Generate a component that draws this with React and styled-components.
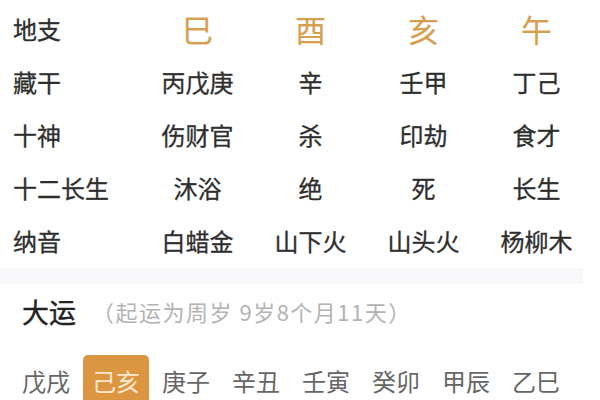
import React from "react";
import styled, { createGlobalStyle } from "styled-components";

const Global = createGlobalStyle`
  html, body { margin: 0; padding: 0; background: #ffffff; }
  body { font-family: "Noto Sans CJK SC", "Noto Sans", sans-serif; width: 600px; height: 400px; overflow: hidden; }
`;

const Page = styled.div`
  width: 600px;
  height: 400px;
  overflow: hidden;
  display: flex;
  flex-direction: column;
  & > * { flex-shrink: 0; }
`;

const Table = styled.div`
  display: grid;
  grid-template-columns: 141px repeat(4, 113px);
  grid-auto-rows: 53px;
  padding-top: 2px;
`;

const Label = styled.div`
  display: flex;
  align-items: center;
  padding-left: 13px;
  font-size: 24px;
  color: #2e2e2e;
  -webkit-text-stroke: 0.3px #2e2e2e;
`;

const Cell = styled.div`
  display: flex;
  align-items: center;
  justify-content: center;
  font-size: ${(p) => (p.$branch ? "31px" : "24px")};
  color: ${(p) => (p.$branch ? "#d69f50" : "#2e2e2e")};
  -webkit-text-stroke: ${(p) => (p.$branch ? "0.2px #d69f50" : "0.3px #2e2e2e")};
`;

const Band = styled.div`
  margin-top: 1px;
  width: 583px;
  height: 16px;
  background: #f8f7fa;
`;

const Header = styled.div`
  box-sizing: border-box;
  display: flex;
  align-items: center;
  height: 60px;
  padding: 0 0 6px 22px;
  gap: 16px;
`;

const Title = styled.div`
  font-size: 27px;
  color: #222;
  -webkit-text-stroke: 0.4px #222;
`;

const Sub = styled.div`
  font-size: 22px;
  letter-spacing: 1.5px;
  color: #b3b3b3;
`;

const Dayun = styled.div`
  display: flex;
  align-items: flex-start;
  padding-left: 13px;
  gap: 4px;
  margin-top: 11px;
`;

const Item = styled.div`
  height: 50px;
  padding: 0 9px;
  display: flex;
  align-items: center;
  font-size: 24px;
  border-radius: 5px;
  background: ${(p) => (p.$active ? "#dc9540" : "transparent")};
  color: ${(p) => (p.$active ? "#fcead0" : "#666")};
`;

const rows = [
  { label: "地支", cells: ["巳", "酉", "亥", "午"], branch: true },
  { label: "藏干", cells: ["丙戊庚", "辛", "壬甲", "丁己"] },
  { label: "十神", cells: ["伤财官", "杀", "印劫", "食才"] },
  { label: "十二长生", cells: ["沐浴", "绝", "死", "长生"] },
  { label: "纳音", cells: ["白蜡金", "山下火", "山头火", "杨柳木"] },
];

const items = ["戊戌", "己亥", "庚子", "辛丑", "壬寅", "癸卯", "甲辰", "乙巳"];

export default function App() {
  return (
    <Page>
      <Global />
      <Table>
        {rows.map((r) => (
          <React.Fragment key={r.label}>
            <Label>{r.label}</Label>
            {r.cells.map((c, i) => (
              <Cell key={i} $branch={r.branch}>{c}</Cell>
            ))}
          </React.Fragment>
        ))}
      </Table>
      <Band />
      <Header>
        <Title>大运</Title>
        <Sub>（起运为周岁 9岁8个月11天）</Sub>
      </Header>
      <Dayun>
        {items.map((t, i) => (
          <Item key={t} $active={i === 1}>{t}</Item>
        ))}
      </Dayun>
    </Page>
  );
}
